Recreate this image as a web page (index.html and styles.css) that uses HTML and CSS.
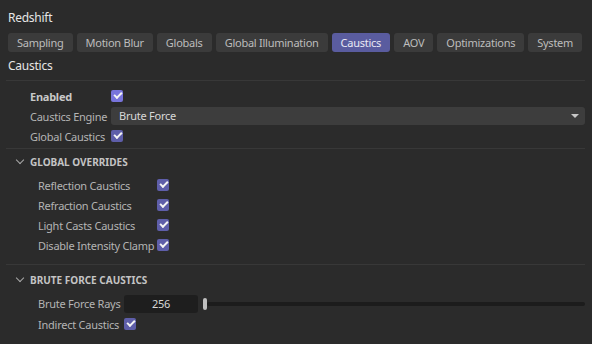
FILE: index.html
```html
<!DOCTYPE html>
<html>
<head>
    <title>Redshift</title>
    <link rel="stylesheet" href="styles.css">
</head>
<body>
    <div class="title">Redshift</div>

    <div class="tabs">
        <span class="tab">Sampling</span>
        <span class="tab">Motion Blur</span>
        <span class="tab">Globals</span>
        <span class="tab">Global Illumination</span>
        <span class="tab active">Caustics</span>
        <span class="tab">AOV</span>
        <span class="tab">Optimizations</span>
        <span class="tab">System</span>
    </div>

    <div class="heading">Caustics</div>

    <div class="group">
        <div class="row">
            <label class="label bold">Enabled</label>
            <span class="check hot"></span>
        </div>
        <div class="row">
            <label class="label">Caustics Engine</label>
            <div class="dropdown">Brute Force<span class="arrow"></span></div>
        </div>
        <div class="row">
            <label class="label">Global Caustics</label>
            <span class="check"></span>
        </div>
    </div>

    <div class="section">
        <div class="section-head"><span class="chevron"></span>GLOBAL OVERRIDES</div>
        <div class="sub">
            <div class="row">
                <label class="label wide">Reflection Caustics</label>
                <span class="check"></span>
            </div>
            <div class="row">
                <label class="label wide">Refraction Caustics</label>
                <span class="check"></span>
            </div>
            <div class="row">
                <label class="label wide">Light Casts Caustics</label>
                <span class="check"></span>
            </div>
            <div class="row">
                <label class="label wide">Disable Intensity Clamp</label>
                <span class="check"></span>
            </div>
        </div>
    </div>

    <div class="section">
        <div class="section-head second"><span class="chevron"></span>BRUTE FORCE CAUSTICS</div>
        <div class="sub">
            <div class="row tall">
                <label class="label mid">Brute Force Rays</label>
                <div class="number">256</div>
                <div class="slider"><span class="handle"></span><span class="track"></span></div>
            </div>
            <div class="row">
                <label class="label mid">Indirect Caustics</label>
                <span class="check"></span>
            </div>
        </div>
    </div>
</body>
</html>
```

FILE: styles.css
```css
body
{
    margin: 0;
    padding: 0 6px 0 6px;
    background-color: #2b2b2b;
    color: #b4b4b4;
    font-family: "Noto Sans", "Open Sans", sans-serif;
    font-size: 11px;
    letter-spacing: -0.25px;
    width: 579px;
}
.title
{
    color: #e6e6e6;
    font-size: 12px;
    padding: 8px 0 0 2px;
    height: 25px;
    line-height: 19px;
}
.tabs
{
    display: flex;
    gap: 4px;
    padding-left: 2px;
}
.tab
{
    flex-shrink: 0;
    white-space: nowrap;
    background-color: #3b3b3b;
    border-radius: 3px;
    height: 19px;
    line-height: 19px;
    padding: 0 9px;
    color: #bdbdbd;
}
.tab.active
{
    background-color: #5a5c9f;
    color: #e8e8f4;
}
.heading
{
    color: #e6e6e6;
    font-size: 12px;
    padding-left: 2px;
    height: 28px;
    line-height: 28px;
    border-bottom: 1px solid #383838;
}
.group
{
    padding: 5px 0 2px 24px;
    border-bottom: 1px solid #383838;
}
.row
{
    display: flex;
    align-items: center;
    height: 20px;
}
.row.tall
{
    height: 21px;
}
.label
{
    flex-shrink: 0;
    width: 81px;
    white-space: nowrap;
}
.label.bold
{
    font-weight: bold;
    color: #c8c8c8;
}
.label.wide
{
    width: 119px;
}
.label.mid
{
    width: 86px;
}
.check
{
    position: relative;
    flex-shrink: 0;
    width: 12px;
    height: 12px;
    border-radius: 2px;
    background-color: #5e5ea9;
}
.check.hot
{
    background-color: #7874db;
}
.check::after
{
    content: "";
    position: absolute;
    left: 3px;
    top: 2px;
    width: 6px;
    height: 3px;
    border-left: 2px solid #f4f4f4;
    border-bottom: 2px solid #f4f4f4;
    transform: rotate(-45deg);
}
.dropdown
{
    position: relative;
    flex: 1;
    height: 18px;
    line-height: 18px;
    background-color: #3d3d3d;
    border-radius: 3px;
    padding-left: 8px;
    color: #d8d8d8;
}
.arrow
{
    position: absolute;
    right: 6px;
    top: 7px;
    border-left: 4px solid transparent;
    border-right: 4px solid transparent;
    border-top: 4px solid #c8c8c8;
}
.section
{
    border-bottom: 1px solid #383838;
}
.section:last-child
{
    border-bottom: none;
}
.section-head
{
    display: flex;
    align-items: center;
    height: 25px;
    font-size: 10px;
    font-weight: bold;
    letter-spacing: 0;
    color: #c4c4c4;
}
.section-head.second
{
    margin-top: 2px;
}
.chevron
{
    width: 5px;
    height: 5px;
    border-right: 1px solid #a8a8a8;
    border-bottom: 1px solid #a8a8a8;
    transform: rotate(45deg);
    margin: 0 7px 3px 11px;
}
.sub
{
    padding: 1px 0 9px 32px;
}
.number
{
    width: 74px;
    height: 18px;
    line-height: 18px;
    background-color: #1e1e1e;
    border-radius: 3px;
    text-align: center;
    color: #d8d8d8;
}
.slider
{
    flex: 1;
    display: flex;
    align-items: center;
    margin-left: 5px;
}
.handle
{
    width: 4px;
    height: 12px;
    border-radius: 2px;
    background-color: #c0c0c0;
}
.track
{
    flex: 1;
    height: 4px;
    border-radius: 2px;
    background-color: #1c1c1c;
}
```
